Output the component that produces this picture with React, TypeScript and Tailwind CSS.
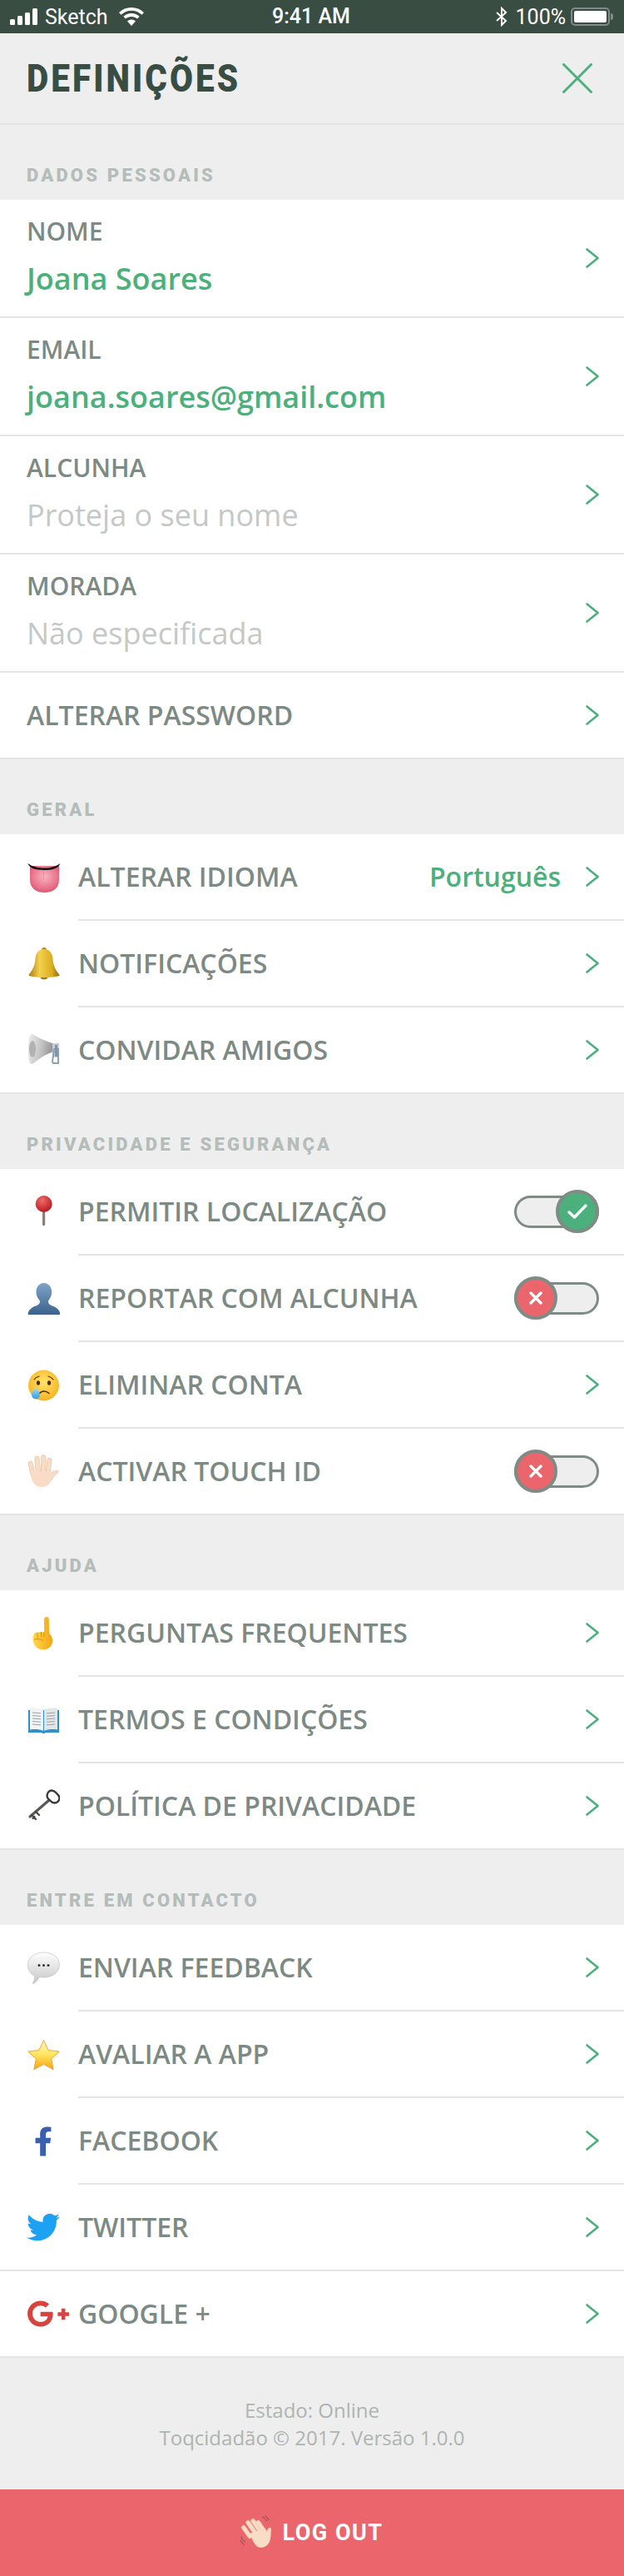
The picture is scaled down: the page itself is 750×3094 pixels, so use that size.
import type { ReactNode } from 'react';
import { FaFacebookF, FaGooglePlusG, FaTwitter } from 'react-icons/fa';

const sansFont = "font-['Open_Sans',sans-serif]";
const headFont = "font-['Roboto',sans-serif]";

function Chevron() {
  return (
    <svg viewBox="0 0 16 24" fill="none" stroke="#4bb07b" strokeWidth={2.6} strokeLinecap="round" strokeLinejoin="round" className="w-4 h-6 shrink-0">
      <polyline points="1.5 1.5 14.5 12 1.5 22.5" />
    </svg>
  );
}

function Toggle({ on }: { on: boolean }) {
  return (
    <div className="relative w-[102px] h-[52px] shrink-0 flex items-center">
      <div className="w-full h-[39px] rounded-full border-[3px] border-[#7f8c85] bg-[#eeeeee]" />
      <div className={`absolute top-0 w-[52px] h-[52px] rounded-full border-4 border-[#7f8c85] flex items-center justify-center ${on ? 'right-0 bg-[#4bb07b]' : 'left-0 bg-[#ea666c]'}`}>
        {on ? (
          <svg viewBox="0 0 24 20" fill="none" stroke="#fff" strokeWidth={3.4} strokeLinecap="round" strokeLinejoin="round" className="w-6 h-5">
            <polyline points="2 11 8.5 17 22 3" />
          </svg>
        ) : (
          <svg viewBox="0 0 16 16" fill="none" stroke="#fff" strokeWidth={3.4} strokeLinecap="round" className="w-4 h-4">
            <path d="M2 2l12 12M14 2L2 14" />
          </svg>
        )}
      </div>
    </div>
  );
}

function Tongue() {
  return (
    <svg viewBox="0 0 40 40" className="w-10 h-10">
      <defs>
        <radialGradient id="tongue" cx="50%" cy="40%" r="65%">
          <stop offset="0" stopColor="#f7b4bf" />
          <stop offset="0.7" stopColor="#e9718a" />
          <stop offset="1" stopColor="#d84f6c" />
        </radialGradient>
      </defs>
      <path d="M4 6h35v17c0 9-7 15-17.500 15S4 32 4 23z" fill="url(#tongue)" />
      <path d="M20.500 8v14" stroke="#d9748a" strokeWidth={1} opacity={0.5} />
      <path d="M1.300 2.800C7 7.500 14 8.500 21 8.500s13-1 19.500-5.700C38 9 32 11 21 11S4 9 1.300 2.800z" fill="#111" />
    </svg>
  );
}

function Bell() {
  return (
    <svg viewBox="0 0 40 40" className="w-10 h-10">
      <defs>
        <linearGradient id="bell" x1="0" x2="1" y1="0" y2="0">
          <stop offset="0" stopColor="#a97c10" />
          <stop offset="0.35" stopColor="#f3d04d" />
          <stop offset="0.75" stopColor="#dcae21" />
          <stop offset="1" stopColor="#94690b" />
        </linearGradient>
      </defs>
      <circle cx="21" cy="3" r="3" fill="#b48a17" />
      <ellipse cx="21" cy="34.500" rx="5" ry="4" fill="#a5780f" />
      <path d="M21 2c7 0 10 5 10.500 12 .5 8 4 14 8 19 .8 1.500-8 3-18.500 3S1.700 34.500 2.500 33c4-5 7.500-11 8-19C11 7 14 2 21 2z" fill="url(#bell)" />
    </svg>
  );
}

function Speaker() {
  return (
    <svg viewBox="0 0 40 40" className="w-10 h-10">
      <defs>
        <linearGradient id="horn" x1="0" x2="1" y1="0" y2="0.200">
          <stop offset="0" stopColor="#eeeeee" />
          <stop offset="0.6" stopColor="#c2c2c2" />
          <stop offset="1" stopColor="#989898" />
        </linearGradient>
      </defs>
      <path d="M6 1c3 0 7 5 25 11 1 .5 1 10 0 10.500-14 5-22 14-25 14.500-3 0-4-8-4-18S3 1 6 1z" fill="url(#horn)" />
      <ellipse cx="7" cy="19" rx="4" ry="10" fill="#b2b2b2" />
      <path d="M31 12h8v17h-8z" fill="#c8ced4" />
      <path d="M33 19h5v17h-6l-1-2z" fill="none" stroke="#8ca0b4" strokeWidth={2} />
      <rect x="34" y="14" width="3" height="14" fill="#7f94aa" />
    </svg>
  );
}

function Pin() {
  return (
    <svg viewBox="0 0 40 40" className="w-10 h-10">
      <defs>
        <radialGradient id="pinHead" cx="40%" cy="30%" r="70%">
          <stop offset="0" stopColor="#ef6a68" />
          <stop offset="1" stopColor="#b81c1f" />
        </radialGradient>
      </defs>
      <rect x="19" y="16" width="3.200" height="20" rx="1" fill="#8b8078" />
      <circle cx="20.700" cy="10" r="10" fill="url(#pinHead)" />
    </svg>
  );
}

function Bust() {
  return (
    <svg viewBox="0 0 40 40" className="w-10 h-10">
      <defs>
        <linearGradient id="bust" x1="0" x2="0" y1="0" y2="1">
          <stop offset="0" stopColor="#80a4c7" />
          <stop offset="1" stopColor="#3a628c" />
        </linearGradient>
      </defs>
      <path d="M20.700 1c6 0 9.500 5 9.500 11 0 4-2 8-4.200 10.500 0 3 1 4.500 5 6C37 30.500 40 34 40.500 39h-39c.5-5 3.500-8.500 9.500-10.500 4-1.500 5-3 5-6C13.500 20 11.500 16 11.500 12c0-6 3.200-11 9.200-11z" fill="url(#bust)" />
    </svg>
  );
}

function CryingFace() {
  return (
    <svg viewBox="0 0 40 40" className="w-10 h-10">
      <defs>
        <radialGradient id="face" cx="50%" cy="40%" r="60%">
          <stop offset="0" stopColor="#ffe46b" />
          <stop offset="1" stopColor="#f6b321" />
        </radialGradient>
        <linearGradient id="tear" x1="0" x2="0" y1="0" y2="1">
          <stop offset="0" stopColor="#a4e0fa" />
          <stop offset="1" stopColor="#2f9de4" />
        </linearGradient>
      </defs>
      <circle cx="20.500" cy="20" r="18.500" fill="url(#face)" />
      <ellipse cx="14" cy="17" rx="2.100" ry="2.800" fill="#4c2f12" />
      <ellipse cx="27" cy="17" rx="2.100" ry="2.800" fill="#4c2f12" />
      <path d="M9 13c1.500-2.500 4-3.500 6-4M32 13c-1.500-2.500-4-3.500-6-4" stroke="#4c2f12" strokeWidth={1.200} fill="none" strokeLinecap="round" />
      <path d="M15 30c3-4 8-4 12-.5" stroke="#4c2f12" strokeWidth={1.600} fill="none" strokeLinecap="round" />
      <path d="M11 22c2.500 4 5 6.500 5 9.500a5 5 0 0 1-10 0c0-3 2.500-5.500 5-9.500z" fill="url(#tear)" />
    </svg>
  );
}

function RaisedHand() {
  return (
    <svg viewBox="0 0 40 40" className="w-10 h-10">
      <g fill="#f8dcc6" stroke="#e6bfa3" strokeWidth={0.700}>
        <rect x="3.500" y="8" width="5" height="19" rx="2.500" transform="rotate(-12 6 17)" />
        <rect x="10.500" y="2" width="5.400" height="22" rx="2.700" transform="rotate(-5 13 13)" />
        <rect x="17.500" y="0.500" width="5.400" height="24" rx="2.700" />
        <rect x="24" y="4" width="5" height="20" rx="2.500" transform="rotate(7 26 14)" />
        <path d="M28 24c2-3 6-5 9-4.500 2 .5 1 2-.5 3-3 2-5 6-7.500 9z" />
      </g>
      <path d="M5 20h25v6c0 8-4 13-12 13-7 0-11-5-12.500-11z" fill="#f8dcc6" />
    </svg>
  );
}

function PointUp() {
  return (
    <svg viewBox="0 0 40 40" className="w-10 h-10">
      <defs>
        <linearGradient id="point" x1="0" x2="1" y1="0" y2="0">
          <stop offset="0" stopColor="#ffd94a" />
          <stop offset="1" stopColor="#f2a516" />
        </linearGradient>
      </defs>
      <path d="M21 3c0-2 1.500-3 3-3s2.800 1 2.800 3l.2 17c3 2 4.500 6 4 10-.5 5-5 9.500-11 9.500C13 39.500 8 34 7.500 27c-.2-2 .5-5 1.500-6.500 1-1.500 3-2 4-1.500 1.500-1 3-1 4.500-.5 1-.5 2.500-.7 3.500-.5z" fill="url(#point)" />
      <path d="M13 19v6M17.500 18v6M21 19v5M9 27c4-1 8-.5 11 1.500" stroke="#cf8a10" strokeWidth={0.900} fill="none" />
    </svg>
  );
}

function Book() {
  return (
    <svg viewBox="0 0 40 40" className="w-10 h-10">
      <path d="M2 8h37v27H23l-2.500 1.500L18 35H2z" fill="#2f8fc7" />
      <path d="M4 6c6-1 12-.5 16 1.500V33c-4-2-10-2.500-16-1.500z" fill="#f1f3f5" />
      <path d="M37 6c-6-1-12-.5-16 1.500V33c4-2 10-2.500 16-1.500z" fill="#e3e6e9" />
      <path d="M7 11l10 .8M7 14.500l10 .8M7 18l10 .8M7 21.500l10 .8M7 25l10 .8M24 11.800l10-.8M24 15.300l10-.8M24 18.800l10-.8M24 22.300l10-.8M24 25.800l10-.8" stroke="#9aa1a8" strokeWidth={1} />
    </svg>
  );
}

function OldKey() {
  return (
    <svg viewBox="0 0 40 40" className="w-10 h-10">
      <path d="M26 14L4 33" stroke="#5e5855" strokeWidth={3.200} strokeLinecap="round" />
      <path d="M6 31l5 5M11 27l4 4M7.500 35l2-2" stroke="#4a4543" strokeWidth={2.400} strokeLinecap="round" />
      <path d="M30 1.500c3 0 4 1.500 5.500 3s4 3 4 6c0 3.500-3 6-6 6-2.500 0-3.500-1-5-2.500S24.500 11.500 24.500 8c0-3.500 2.500-6.500 5.500-6.500z" fill="none" stroke="#3c3836" strokeWidth={2.400} />
    </svg>
  );
}

function Bubble() {
  return (
    <svg viewBox="0 0 40 40" className="w-10 h-10">
      <defs>
        <linearGradient id="bubble" x1="0" x2="0" y1="0" y2="1">
          <stop offset="0" stopColor="#ffffff" />
          <stop offset="1" stopColor="#c6c6c6" />
        </linearGradient>
      </defs>
      <path d="M20.500 1C31 1 39.500 7 39.500 16c0 8.500-8 15-19 15-2 0-3.500-.2-5-.5-1.500 2.500-4.500 7-7.500 8-1 0-.5-1 .5-3 1-2 1.500-4 1-6.500C4 26.500 1.500 21.500 1.500 16 1.500 7 10 1 20.500 1z" fill="url(#bubble)" stroke="#b8b8b8" strokeWidth={0.600} />
      <circle cx="15" cy="16.500" r="1.500" fill="#333" />
      <circle cx="20.500" cy="16.500" r="1.500" fill="#333" />
      <circle cx="26" cy="16.500" r="1.500" fill="#333" />
    </svg>
  );
}

function Star() {
  return (
    <svg viewBox="0 0 40 40" className="w-10 h-10">
      <defs>
        <linearGradient id="star" x1="0" x2="0" y1="0" y2="1">
          <stop offset="0" stopColor="#fffbd0" />
          <stop offset="0.5" stopColor="#ffe45c" />
          <stop offset="1" stopColor="#f7a115" />
        </linearGradient>
      </defs>
      <path d="M20.500 2.500l5.700 12 13 1.500-9.600 8.800 2.600 13-11.700-6.500L8.800 37.800l2.600-13-9.600-8.800 13-1.500z" fill="url(#star)" stroke="#f0a52c" strokeWidth={1} strokeLinejoin="round" />
    </svg>
  );
}

function Wave() {
  return (
    <svg viewBox="0 0 40 40" className="w-10 h-10">
      <g fill="#f8dcc6" stroke="#e8c4a8" strokeWidth={0.600}>
        <rect x="5" y="10" width="5" height="18" rx="2.500" transform="rotate(-35 7.500 19)" />
        <rect x="11" y="4" width="5" height="21" rx="2.500" transform="rotate(-35 13.500 14)" />
        <rect x="17" y="2" width="5" height="21" rx="2.500" transform="rotate(-35 19.500 12)" />
        <rect x="22.500" y="4" width="5" height="18" rx="2.500" transform="rotate(-35 25 13)" />
        <path d="M31 22c0-3 1.500-7 4-8 1.500-.5 2 1 1.800 3-.4 3-.3 6-.8 9z" />
      </g>
      <path d="M11 21l18-6 7 11c0 7-6 12-11 12-6 0-9-5-14-17z" fill="#f8dcc6" />
      <path d="M26 1c3 1 4.500 2.500 5.500 5M29 0c2.500.8 4 2.500 5 5M1 25c.8 3 2.500 5 5 6M0 29c.8 2.500 2.500 4.500 4.500 5" stroke="#555" strokeWidth={0.900} fill="none" />
    </svg>
  );
}

function SectionTitle({ children }: { children: ReactNode }) {
  return (
    <div className="h-[90px] flex items-end pl-8 pb-[18px]">
      <h2 className={`${headFont} text-[22px] leading-[22px] font-black tracking-[3.2px] text-[#b5bdba]`}>{children}</h2>
    </div>
  );
}

function FieldRow({ label, value, filled }: { label: string; value: string; filled?: boolean }) {
  return (
    <div className="h-[142px] bg-white border-b-2 border-[#e4e4e4] flex items-center justify-between pl-8 pr-[30px]">
      <div className="flex flex-col -mt-1">
        <span className="text-[30px] leading-[40px] font-semibold text-[#7d8a84]">{label}</span>
        <span className={`text-[36px] leading-[46px] mt-[14px] ${filled ? 'text-[#4bb07b] font-semibold' : 'text-[#c4c8c6]'}`}>{value}</span>
      </div>
      <Chevron />
    </div>
  );
}

type RowProps = {
  icon?: ReactNode;
  label: string;
  value?: string;
  toggle?: boolean;
  fullLine?: boolean;
  innerLine?: boolean;
};

function Row({ icon, label, value, toggle, fullLine, innerLine }: RowProps) {
  return (
    <div className={`h-[104px] bg-white flex items-stretch pl-8 ${fullLine ? 'border-b-2 border-[#e4e4e4]' : ''}`}>
      {icon && <div className="w-10 mr-[22px] shrink-0 flex items-center justify-start">{icon}</div>}
      <div className={`flex-1 flex items-center justify-between pr-[30px] ${innerLine ? 'border-b-2 border-[#e4e4e4]' : ''}`}>
        <span className="text-[32px] font-semibold text-[#7d8a84]">{label}</span>
        <div className="flex items-center gap-[30px]">
          {value && <span className="text-[32px] font-semibold text-[#4bb07b]">{value}</span>}
          {toggle === undefined ? <Chevron /> : <Toggle on={toggle} />}
        </div>
      </div>
    </div>
  );
}

export default function App() {
  return (
    <div className={`${sansFont} w-[750px] h-[3094px] bg-[#eeeeee] flex flex-col`}>
      <div className="h-10 bg-[#3a4d42] flex items-center justify-between pl-3 pr-[13px] font-['Roboto',sans-serif] text-[25px] text-white relative">
        <div className="flex items-center">
          <svg viewBox="0 0 34 20" fill="#fff" className="w-[34px] h-5">
            <rect x="0" y="13" width="6" height="7" rx="1.500" />
            <rect x="9" y="9" width="6" height="11" rx="1.500" />
            <rect x="18" y="5" width="6" height="15" rx="1.500" />
            <rect x="27" y="0" width="6" height="20" rx="1.500" />
          </svg>
          <span className="ml-2 leading-none">Sketch</span>
          <svg viewBox="0 0 30 22" fill="#fff" className="w-[30px] h-[22px] ml-[13px]">
            <path d="M15 0C9 0 4 2.300 0 6l2.500 2.800C6 5.500 10.300 3.700 15 3.700s9 1.800 12.500 5.100L30 6c-4-3.700-9-6-15-6z" />
            <path d="M15 7c-3.800 0-7 1.400-9.700 3.800l2.600 2.800C9.800 11.900 12.300 11 15 11s5.200.9 7.100 2.600l2.600-2.800C22 8.400 18.800 7 15 7z" />
            <path d="M15 14.500c-2 0-3.700.7-5 2l5 5.500 5-5.500c-1.300-1.300-3-2-5-2z" />
          </svg>
        </div>
        <span className="absolute left-[327px] top-[6px] leading-[28px] font-medium">9:41 AM</span>
        <div className="flex items-center">
          <svg viewBox="0 0 14 24" fill="none" stroke="#fff" strokeWidth={2} className="w-[14px] h-6">
            <polyline points="1 7 12 17 7 22 7 2 12 7 1 17" />
          </svg>
          <span className="ml-[10px] leading-none">100%</span>
          <div className="ml-[6px] w-[47px] h-[22px] rounded-[5px] border-2 border-[#7f8c85] p-[2px]">
            <div className="w-full h-full rounded-[2px] bg-white" />
          </div>
          <div className="w-[3px] h-2 rounded-r-sm bg-[#7f8c85] ml-[1px]" />
        </div>
      </div>

      <header className="h-[110px] border-b-2 border-[#e4e4e4] flex items-center justify-between pl-8 pr-[38px]">
        <h1 className={`${headFont} text-[46px] leading-[60px] font-black tracking-[3.5px] text-[#3a4d42] origin-left scale-x-[.88]`}>DEFINIÇÕES</h1>
        <svg viewBox="0 0 36 36" fill="none" stroke="#4bb07b" strokeWidth={3} strokeLinecap="round" className="w-9 h-9">
          <path d="M1.500 1.500l33 33M34.500 1.500l-33 33" />
        </svg>
      </header>

      <SectionTitle>DADOS PESSOAIS</SectionTitle>
      <FieldRow label="NOME" value="Joana Soares" filled />
      <FieldRow label="EMAIL" value="joana.soares@gmail.com" filled />
      <FieldRow label="ALCUNHA" value="Proteja o seu nome" />
      <FieldRow label="MORADA" value="Não especificada" />
      <Row label="ALTERAR PASSWORD" fullLine />

      <SectionTitle>GERAL</SectionTitle>
      <Row icon={<Tongue />} label="ALTERAR IDIOMA" value="Português" innerLine />
      <Row icon={<Bell />} label="NOTIFICAÇÕES" innerLine />
      <Row icon={<Speaker />} label="CONVIDAR AMIGOS" fullLine />

      <SectionTitle>PRIVACIDADE E SEGURANÇA</SectionTitle>
      <Row icon={<Pin />} label="PERMITIR LOCALIZAÇÃO" toggle innerLine />
      <Row icon={<Bust />} label="REPORTAR COM ALCUNHA" toggle={false} innerLine />
      <Row icon={<CryingFace />} label="ELIMINAR CONTA" innerLine />
      <Row icon={<RaisedHand />} label="ACTIVAR TOUCH ID" toggle={false} fullLine />

      <SectionTitle>AJUDA</SectionTitle>
      <Row icon={<PointUp />} label="PERGUNTAS FREQUENTES" innerLine />
      <Row icon={<Book />} label="TERMOS E CONDIÇÕES" innerLine />
      <Row icon={<OldKey />} label="POLÍTICA DE PRIVACIDADE" fullLine />

      <SectionTitle>ENTRE EM CONTACTO</SectionTitle>
      <Row icon={<Bubble />} label="ENVIAR FEEDBACK" innerLine />
      <Row icon={<Star />} label="AVALIAR A APP" innerLine />
      <Row icon={<FaFacebookF className="w-[22px] h-[38px] ml-[9px] text-[#3b5fb0]" />} label="FACEBOOK" innerLine />
      <Row icon={<FaTwitter className="w-10 h-10 text-[#1da1f2]" />} label="TWITTER" fullLine />
      <Row icon={<FaGooglePlusG className="w-[52px] h-[42px] shrink-0 text-[#d8433f]" />} label="GOOGLE +" fullLine />

      <footer className="h-[158px] flex flex-col items-center pt-[46px] text-[24px] leading-[33px] text-[#aeb4b1]">
        <p>Estado: Online</p>
        <p>Toqcidadão © 2017. Versão 1.0.0</p>
      </footer>

      <button className="h-[104px] bg-[#ea666c] flex items-center justify-center gap-[10px]">
        <Wave />
        <span className={`${headFont} text-[27px] font-bold tracking-[1.5px] text-white`}>LOG OUT</span>
      </button>
    </div>
  );
}
